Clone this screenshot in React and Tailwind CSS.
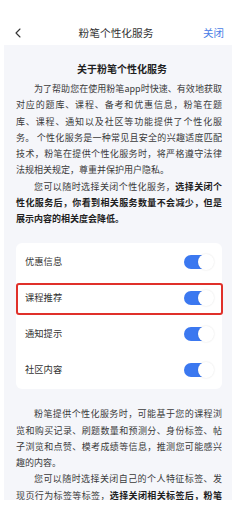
import { ChevronLeft } from 'lucide-react'

const rows = [
  { label: '优惠信息' },
  { label: '课程推荐', marked: true },
  { label: '通知提示' },
  { label: '社区内容' },
]

function Toggle() {
  return (
    <div className="relative w-[29px] h-[14px] rounded-full bg-[#3b78f0]">
      <div className="absolute right-[-1px] top-[-1px] w-[16px] h-[16px] rounded-full bg-white shadow-[0_0_2px_rgba(0,0,0,0.12)]" />
    </div>
  )
}

export default function App() {
  return (
    <div
      className="w-[232px] h-[506px] bg-white overflow-hidden"
      style={{ fontFamily: '"Noto Sans CJK SC", "Noto Sans", sans-serif' }}
    >
      <div className="relative h-[45px] flex items-center justify-between pl-[10px] pr-[8px] pt-[20px]">
        <ChevronLeft className="w-[16px] h-[16px] text-[#333]" strokeWidth={1.6} />
        <span className="absolute left-0 right-0 top-[20px] leading-[26px] text-center text-[10.7px] text-[#333] pointer-events-none">
          粉笔个性化服务
        </span>
        <span className="text-[10.5px] leading-[26px] text-[#4a7ee6]">关闭</span>
      </div>

      <div className="ml-[4px] h-[455px] bg-[#f5f6fa] pl-[12px] pr-[10px] pt-[16px] overflow-hidden">
        <h2 className="text-center text-[10px] leading-[16px] font-bold text-[#1f1f1f] pl-[6px]">
          关于粉笔个性化服务
        </h2>

        <div className="mt-[4px] text-[9px] leading-[16.25px] text-[#3a3a3a] text-justify">
          <p className="indent-[2em]">
            为了帮助您在使用粉笔app时快速、有效地获取对应的题库、课程、备考和优惠信息，粉笔在题库、课程、通知以及社区等功能提供了个性化服务。 个性化服务是一种常见且安全的兴趣适度匹配技术，粉笔在提供个性化服务时，将严格遵守法律法规相关规定，尊重并保护用户隐私。
          </p>
          <p className="indent-[2em]">
            您可以随时选择关闭个性化服务，
            <span className="font-bold text-[#1f1f1f]">选择关闭个性化服务后，你看到相关服务数量不会减少，但是展示内容的相关度会降低。</span>
          </p>
        </div>

        <div className="mt-[16px] bg-white rounded-[6px] py-[1px]">
          {rows.map((row) => (
            <div key={row.label} className="relative h-[36px] flex items-center justify-between pl-[9px] pr-[9px]">
              <span className="text-[9.3px] text-[#333]">{row.label}</span>
              <Toggle />
              {row.marked && (
                <div className="absolute left-0 right-[-1px] top-[3px] bottom-[1px] border-2 border-[#e0302a] rounded-[3px]" />
              )}
            </div>
          ))}
        </div>

        <div className="mt-[17px] text-[9px] leading-[16.25px] text-[#3a3a3a] text-justify">
          <p className="indent-[2em]">
            粉笔提供个性化服务时，可能基于您的课程浏览和购买记录、刷题数量和预测分、身份标签、帖子浏览和点赞、模考成绩等信息，推测您可能感兴趣的内容。
          </p>
          <p className="indent-[2em]">
            您可以随时选择关闭自己的个人特征标签、发现页行为标签等标签，
            <span className="font-bold text-[#1f1f1f]">选择关闭相关标签后，粉笔将不再基于这些标签为您推荐内容。</span>
          </p>
        </div>
      </div>
    </div>
  )
}
